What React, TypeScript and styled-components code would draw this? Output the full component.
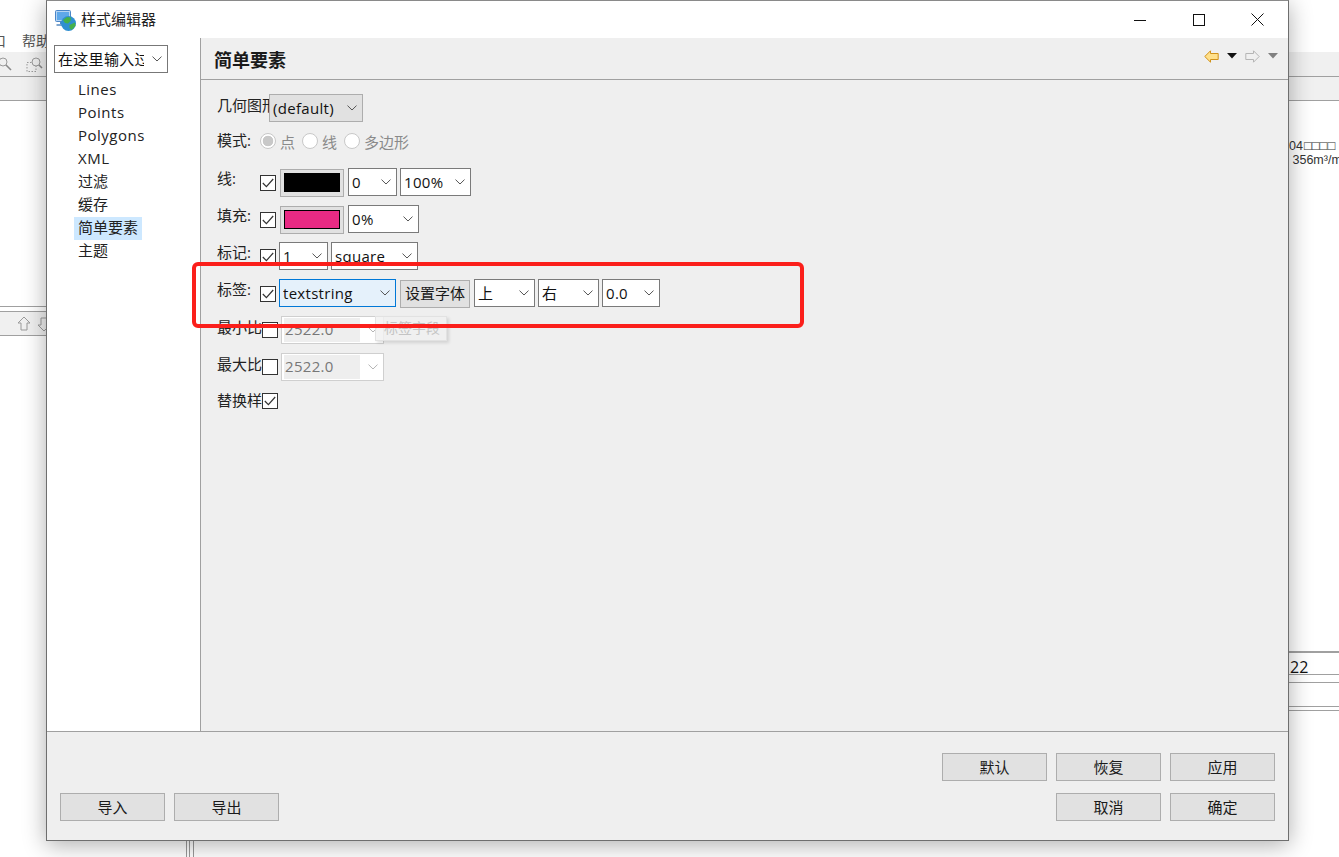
import React from 'react';
import styled, { createGlobalStyle } from 'styled-components';

const GlobalStyle = createGlobalStyle`
  html, body { margin: 0; padding: 0; background: #fff; overflow: hidden; }
  #root { width: 1339px; height: 857px; }
  * { box-sizing: border-box; }
`;

const FONT = `"Open Sans", "Noto Sans", "Noto Sans CJK SC", sans-serif`;

const Screen = styled.div`
  position: relative;
  width: 1339px;
  height: 857px;
  overflow: hidden;
  font-family: ${FONT};
  font-size: 15px;
  color: #111;
`;

/* the application behind the dialog, only its edges show */
const BackWindow = styled.div`
  position: absolute;
  inset: 0;
  display: flex;
  flex-direction: column;
`;

const MenuBar = styled.div`
  height: 52px;
  flex: none;
  display: flex;
  gap: 16px;
  padding: 31px 0 0 0;
  font-size: 14px;
  line-height: 20px;
  color: #555;
  margin-left: -8px;
`;

const BackBar = styled.div<{ $h: number; $bg?: string }>`
  height: ${(p) => p.$h}px;
  flex: none;
  background: ${(p) => p.$bg || '#f0f0f0'};
  border-bottom: 1px solid #a0a0a0;
  display: flex;
  align-items: center;
  gap: 7px;
`;

const BackBody = styled.div`
  flex: 1;
  display: flex;
  justify-content: space-between;
`;

const BackLeft = styled.div`
  width: 190px;
  padding-top: 205px;
  display: flex;
  flex-direction: column;
`;

const BackRight = styled.div`
  width: 50px;
  padding-top: 38px;
  display: flex;
  flex-direction: column;
  font-size: 12.5px;
  line-height: 14px;
  color: #333;
  font-family: "Liberation Sans", sans-serif;
  white-space: nowrap;
`;

const Boxes = styled.span`
  letter-spacing: 0;
  margin-left: 1px;
  font-size: 13px;
`;

const BackLine = styled.div<{ $mt: number }>`
  height: 1px;
  flex: none;
  margin-top: ${(p) => p.$mt}px;
  background: #a0a0a0;
`;

const SideBand = styled.div`
  height: 25px;
  flex: none;
  margin-top: 4px;
  background: #f0f0f0;
  border-top: 1px solid #a0a0a0;
  border-bottom: 1px solid #a0a0a0;
  display: flex;
  align-items: center;
  gap: 6px;
  padding-left: 17px;
`;

const CellText = styled.div`
  height: 21px;
  padding-left: 1px;
  font-family: ${FONT};
  font-size: 16px;
  line-height: 28px;
  color: #111;
`;

const SplitLines = styled.div`
  position: absolute;
  left: 186px;
  bottom: 0;
  width: 8px;
  height: 17px;
  border-left: 1px solid #999;
  border-right: 1px solid #999;
  &::after {
    content: '';
    position: absolute;
    left: 2px;
    top: 0;
    bottom: 0;
    width: 1px;
    background: #999;
  }
`;

/* dialog */
const Dialog = styled.div`
  position: absolute;
  left: 46px;
  top: 0;
  width: 1243px;
  height: 841px;
  background: #fff;
  border: 1px solid #6e6e6e;
  border-top-color: #8a8a8a;
  box-shadow: 0 4px 22px rgba(0, 0, 0, 0.32);
  display: flex;
  flex-direction: column;
`;

const TitleBar = styled.div`
  height: 37px;
  flex: none;
  display: flex;
  align-items: center;
  padding-left: 8px;
  background: #fff;
`;

const TitleText = styled.div`
  margin-left: 4px;
  font-size: 15px;
  line-height: 20px;
  color: #222;
  margin-top: -1px;
`;

const WinButtons = styled.div`
  margin-left: auto;
  display: flex;
  align-items: center;
  padding-right: 1px;
`;

const WinButton = styled.div`
  width: 59px;
  height: 37px;
  display: flex;
  align-items: center;
  justify-content: center;
`;

const Body = styled.div`
  flex: 1;
  min-height: 0;
  display: flex;
  border-bottom: 1px solid #a0a0a0;
`;

const TreePane = styled.div`
  width: 153px;
  flex: none;
  background: #fff;
  padding: 7px 0 0 7px;
`;

const TreeList = styled.div`
  margin-top: 6px;
  padding-left: 20px;
  display: flex;
  flex-direction: column;
  align-items: flex-start;
`;

const TreeItem = styled.div<{ $selected?: boolean; $latin?: boolean }>`
  height: 23px;
  line-height: 21px;
  padding: 0 4px;
  color: #222;
  font-size: 15px;
  letter-spacing: ${(p) => (p.$latin ? '0.5px' : '0')};
  background: ${(p) => (p.$selected ? '#cde8ff' : 'transparent')};
`;

const EditorPane = styled.div`
  flex: 1;
  background: #efefef;
  border-left: 1px solid #a0a0a0;
  display: flex;
  flex-direction: column;
  position: relative;
`;

const EditorHeader = styled.div`
  height: 42px;
  flex: none;
  display: flex;
  align-items: center;
  padding: 1px 10px 0 13px;
  border-bottom: 1px solid #a0a0a0;
`;

const EditorTitle = styled.div`
  font-size: 18px;
  font-weight: 700;
  color: #1a1a1a;
`;

const HistoryNav = styled.div`
  margin-left: auto;
  display: flex;
  align-items: center;
  gap: 8px;
  margin-top: -6px;
`;

const Form = styled.div`
  padding: 14px 0 0 16px;
  display: flex;
  flex-direction: column;
`;

const Row = styled.div<{ $top?: number; $h?: number }>`
  height: ${(p) => p.$h ?? 28}px;
  margin-top: ${(p) => p.$top ?? 9}px;
  display: flex;
  align-items: center;
`;

const FieldLabel = styled.div<{ $w: number; $mt?: number }>`
  width: ${(p) => p.$w}px;
  flex: none;
  height: 22px;
  overflow: hidden;
  white-space: nowrap;
  line-height: 21px;
  margin-top: ${(p) => p.$mt ?? -7}px;
  font-size: 15px;
  color: #222;
`;

const CheckBox = styled.div<{ $ml?: number; $mr?: number; $mt?: number }>`
  width: 16px;
  height: 16px;
  flex: none;
  margin-left: ${(p) => p.$ml ?? 0}px;
  margin-right: ${(p) => p.$mr ?? 3}px;
  margin-top: ${(p) => p.$mt ?? 2}px;
  border: 1px solid #333;
  background: #fff;
  display: flex;
  align-items: center;
  justify-content: center;
`;

const SelectBox = styled.div<{ $w: number; $ml?: number; $focus?: boolean; $bg?: string; $off?: boolean; $edge?: string }>`
  width: ${(p) => p.$w}px;
  height: 28px;
  flex: none;
  margin-left: ${(p) => p.$ml ?? 0}px;
  display: flex;
  align-items: center;
  justify-content: space-between;
  padding: 0 5px 0 3px;
  border: 1px solid ${(p) => (p.$focus ? '#0078d7' : p.$off ? '#cfcfcf' : p.$edge || '#7a7a7a')};
  background: ${(p) => (p.$focus ? '#e5f1fb' : p.$bg || '#fff')};
  color: #111;
  font-size: 15px;
  white-space: nowrap;
  overflow: hidden;
`;

const SelectText = styled.span`
  min-width: 0;
  overflow: hidden;
  margin-right: 8px;
  letter-spacing: 0.3px;
  line-height: 24px;
  margin-top: -1px;
`;

const DisabledValue = styled.span`
  width: 76px;
  height: 24px;
  background: #eee;
  color: #777;
  line-height: 23px;
  padding-left: 1px;
  margin-left: -1px;
  letter-spacing: 0.3px;
`;

const ColorButton = styled.div<{ $color: string; $edge: string }>`
  width: 64px;
  height: 28px;
  flex: none;
  margin-left: 1px;
  margin-right: 4px;
  margin-top: 1px;
  border: 1px solid #adadad;
  background: #e1e1e1;
  display: flex;
  align-items: center;
  justify-content: center;
  &::after {
    content: '';
    width: 54px;
    height: 17px;
    background: ${(p) => p.$color};
    border: 1px solid ${(p) => p.$edge};
  }
`;

const PushButton = styled.div<{ $w?: number }>`
  width: ${(p) => p.$w ?? 105}px;
  height: 28px;
  flex: none;
  border: 1px solid #adadad;
  background: #e1e1e1;
  display: flex;
  align-items: center;
  justify-content: center;
  padding-bottom: 2px;
  font-size: 15px;
  color: #1a1a1a;
  white-space: nowrap;
`;

const FontButton = styled(PushButton)`
  margin: 1px 4px 0 4px;
`;

const RadioGroup = styled.div`
  display: flex;
  align-items: center;
  color: #8a8a8a;
  font-size: 15px;
`;

const Radio = styled.span<{ $on?: boolean; $ml?: number }>`
  width: 16px;
  height: 16px;
  margin-left: ${(p) => p.$ml ?? 0}px;
  margin-right: 4px;
  border-radius: 50%;
  border: 1px solid #c8c8c8;
  background: ${(p) => (p.$on ? 'radial-gradient(circle, #c8c8c8 0 5px, #fff 5.6px)' : '#fff')};
  flex: none;
`;

const Tip = styled.div`
  position: absolute;
  left: 174px;
  top: 278px;
  width: 72px;
  height: 25px;
  background: rgba(240, 240, 240, 0.82);
  border: 1px solid #e2e2e2;
  box-shadow: 2px 2px 3px rgba(0, 0, 0, 0.12);
  color: #c4c4c4;
  font-size: 14px;
  line-height: 22px;
  padding-left: 8px;
`;

const Callout = styled.div`
  position: absolute;
  left: 192px;
  top: 262px;
  width: 612px;
  height: 66px;
  border: 4px solid #fb1f1b;
  border-radius: 6px;
  pointer-events: none;
`;

const Footer = styled.div`
  height: 108px;
  flex: none;
  background: #efefef;
  display: flex;
  justify-content: space-between;
  align-items: flex-end;
  padding: 0 13px 19px 13px;
`;

const ButtonRow = styled.div`
  display: flex;
  justify-content: flex-end;
  gap: 9px;
`;

const ButtonStack = styled.div`
  display: flex;
  flex-direction: column;
  gap: 12px;
`;

const Chevron = ({ off }: { off?: boolean }) => (
  <svg width="10" height="6" viewBox="0 0 10 6" style={{ flex: 'none' }}>
    <path d="M0.5 0.6 L5 5 L9.5 0.6" fill="none" stroke={off ? '#b5b5b5' : '#555'} strokeWidth="1" />
  </svg>
);

const Check = () => (
  <svg width="12" height="10" viewBox="0 0 12 10">
    <path d="M0.8 5 L4.4 8.6 L11.2 1" fill="none" stroke="#333" strokeWidth="1.2" />
  </svg>
);

const Select = (props: React.ComponentProps<typeof SelectBox> & { text: string }) => {
  const { text, ...rest } = props;
  return (
    <SelectBox {...rest}>
      <SelectText>{text}</SelectText>
      <Chevron />
    </SelectBox>
  );
};

const AppIcon = () => (
  <svg width="22" height="22" viewBox="0 0 22 22" style={{ marginTop: 3, flex: 'none' }}>
    <rect x="0.5" y="0.5" width="15" height="11" rx="1" fill="#b7d4f2" stroke="#4a86c8" />
    <rect x="2" y="2" width="12" height="8" fill="#5fa8ea" />
    <rect x="5" y="12" width="6" height="2" fill="#4a86c8" />
    <rect x="1.5" y="14" width="11" height="2" fill="#7fa5cf" />
    <circle cx="13.5" cy="13.5" r="7.5" fill="#2f8fd0" />
    <path d="M8 10 L12 7 L16 7.5 L15.5 11 L13 13.5 L10 13 Z M14.5 15 L20 12.5 L20.5 16 L16.5 20 L14.5 18 Z" fill="#45b04a" />
  </svg>
);

const NavArrow = ({ dir, fill, stroke }: { dir: 'left' | 'right'; fill: string; stroke: string }) => (
  <svg width="15" height="13" viewBox="0 0 15 13" style={{ transform: dir === 'right' ? 'scaleX(-1)' : undefined }}>
    <path d="M0.8 6.5 L6.5 0.8 V3.5 H14.2 V9.5 H6.5 V12.2 Z" fill={fill} stroke={stroke} strokeLinejoin="round" />
  </svg>
);

const DropTri = ({ color }: { color: string }) => (
  <svg width="10" height="6" viewBox="0 0 10 6">
    <path d="M0 0 H10 L5 5.5 Z" fill={color} />
  </svg>
);

const UpArrow = ({ rotate }: { rotate?: boolean }) => (
  <svg width="14" height="16" viewBox="0 0 14 16" style={{ transform: rotate ? 'rotate(180deg)' : undefined }}>
    <path d="M7 1 L13 7 H10 V14 H4 V7 H1 Z" fill="#f0f0f0" stroke="#9a9a9a" />
  </svg>
);

const ZoomGlyph = ({ boxed }: { boxed?: boolean }) => (
  <svg width="17" height="17" viewBox="0 0 17 17" style={{ flex: 'none', marginLeft: boxed ? 5 : -3 }}>
    {boxed && <rect x="1" y="6.5" width="9" height="9" fill="none" stroke="#9a9a9a" strokeDasharray="1.5 1.5" />}
    <circle cx={boxed ? 10 : 6} cy="6" r="4" fill="#f0f0f0" stroke="#9a9a9a" />
    <path d={boxed ? 'M13 9 L16 12' : 'M9 9 L14 14'} stroke="#8a8a8a" strokeWidth="1.6" />
  </svg>
);

export default function App() {
  return (
    <Screen>
      <GlobalStyle />
      <BackWindow>
        <MenuBar>
          <span>口</span>
          <span>帮助</span>
        </MenuBar>
        <BackBar $h={25}>
          <ZoomGlyph />
          <ZoomGlyph boxed />
        </BackBar>
        <BackBar $h={24} />
        <BackBody>
          <BackLeft>
            <BackLine $mt={0} />
            <SideBand>
              <UpArrow />
              <UpArrow rotate />
            </SideBand>
          </BackLeft>
          <BackRight>
            <span>
              04<Boxes>□□□□</Boxes>
            </span>
            <span>&nbsp;356m³/m</span>
            <BackLine $mt={484} />
            <BackLine $mt={0} />
            <CellText>22</CellText>
            <BackLine $mt={0} />
            <BackLine $mt={7} />
            <BackLine $mt={23} />
            <BackLine $mt={3} />
          </BackRight>
        </BackBody>
      </BackWindow>
      <SplitLines />

      <Dialog>
        <TitleBar>
          <AppIcon />
          <TitleText>样式编辑器</TitleText>
          <WinButtons>
            <WinButton>
              <svg width="12" height="12" viewBox="0 0 12 12">
                <path d="M0 6.5 H12" stroke="#111" />
              </svg>
            </WinButton>
            <WinButton>
              <svg width="12" height="12" viewBox="0 0 12 12">
                <rect x="0.5" y="0.5" width="11" height="11" fill="none" stroke="#111" />
              </svg>
            </WinButton>
            <WinButton>
              <svg width="13" height="13" viewBox="0 0 13 13">
                <path d="M0.5 0.5 L12.5 12.5 M12.5 0.5 L0.5 12.5" stroke="#111" />
              </svg>
            </WinButton>
          </WinButtons>
        </TitleBar>

        <Body>
          <TreePane>
            <Select $w={114} $edge="#777" text="在这里输入过滤" />
            <TreeList>
              <TreeItem $latin>Lines</TreeItem>
              <TreeItem $latin>Points</TreeItem>
              <TreeItem $latin>Polygons</TreeItem>
              <TreeItem $latin>XML</TreeItem>
              <TreeItem>过滤</TreeItem>
              <TreeItem>缓存</TreeItem>
              <TreeItem $selected>简单要素</TreeItem>
              <TreeItem>主题</TreeItem>
            </TreeList>
          </TreePane>

          <EditorPane>
            <EditorHeader>
              <EditorTitle>简单要素</EditorTitle>
              <HistoryNav>
                <NavArrow dir="left" fill="#ffe08a" stroke="#d1921a" />
                <DropTri color="#111" />
                <NavArrow dir="right" fill="#f0f0f0" stroke="#b5b5b5" />
                <DropTri color="#808080" />
              </HistoryNav>
            </EditorHeader>

            <Form>
              <Row $top={0}>
                <FieldLabel $w={52} $mt={-4}>几何图形</FieldLabel>
                <Select $w={94} $bg="#e1e1e1" $edge="#adadad" text="(default)" />
              </Row>

              <Row $top={7} $h={24}>
                <FieldLabel $w={43} $mt={0}>模式:</FieldLabel>
                <RadioGroup>
                  <Radio $on />
                  <span>点</span>
                  <Radio $ml={7} />
                  <span>线</span>
                  <Radio $ml={7} />
                  <span>多边形</span>
                </RadioGroup>
              </Row>

              <Row $top={15}>
                <FieldLabel $w={43}>线:</FieldLabel>
                <CheckBox><Check /></CheckBox>
                <ColorButton $color="#000" $edge="#000" />
                <Select $w={49} text="0" />
                <Select $w={71} $ml={3} text="100%" />
              </Row>

              <Row>
                <FieldLabel $w={43}>填充:</FieldLabel>
                <CheckBox><Check /></CheckBox>
                <ColorButton $color="#e92a84" $edge="#000" />
                <Select $w={71} text="0%" />
              </Row>

              <Row>
                <FieldLabel $w={43}>标记:</FieldLabel>
                <CheckBox><Check /></CheckBox>
                <Select $w={49} text="1" />
                <Select $w={87} $ml={3} text="square" />
              </Row>

              <Row>
                <FieldLabel $w={43}>标签:</FieldLabel>
                <CheckBox><Check /></CheckBox>
                <Select $w={117} $focus text="textstring" />
                <FontButton $w={70}>设置字体</FontButton>
                <Select $w={61} text="上" />
                <Select $w={61} $ml={3} text="右" />
                <Select $w={58} $ml={3} text="0.0" />
              </Row>

              <Row>
                <FieldLabel $w={45} $mt={-5}>最小比例</FieldLabel>
                <CheckBox $mt={0} />
                <SelectBox $w={103} $off>
                  <DisabledValue>2522.0</DisabledValue>
                  <Chevron off />
                </SelectBox>
              </Row>

              <Row>
                <FieldLabel $w={45} $mt={-5}>最大比例</FieldLabel>
                <CheckBox $mt={0} />
                <SelectBox $w={103} $off>
                  <DisabledValue>2522.0</DisabledValue>
                  <Chevron off />
                </SelectBox>
              </Row>

              <Row $top={7} $h={24}>
                <FieldLabel $w={45} $mt={2}>替换样式</FieldLabel>
                <CheckBox $mt={1}><Check /></CheckBox>
              </Row>
            </Form>
            <Tip>标签字段</Tip>
          </EditorPane>
        </Body>

        <Footer>
          <ButtonRow>
            <PushButton>导入</PushButton>
            <PushButton>导出</PushButton>
          </ButtonRow>
          <ButtonStack>
            <ButtonRow>
              <PushButton>默认</PushButton>
              <PushButton>恢复</PushButton>
              <PushButton>应用</PushButton>
            </ButtonRow>
            <ButtonRow>
              <PushButton>取消</PushButton>
              <PushButton>确定</PushButton>
            </ButtonRow>
          </ButtonStack>
        </Footer>
      </Dialog>
      <Callout />
    </Screen>
  );
}
